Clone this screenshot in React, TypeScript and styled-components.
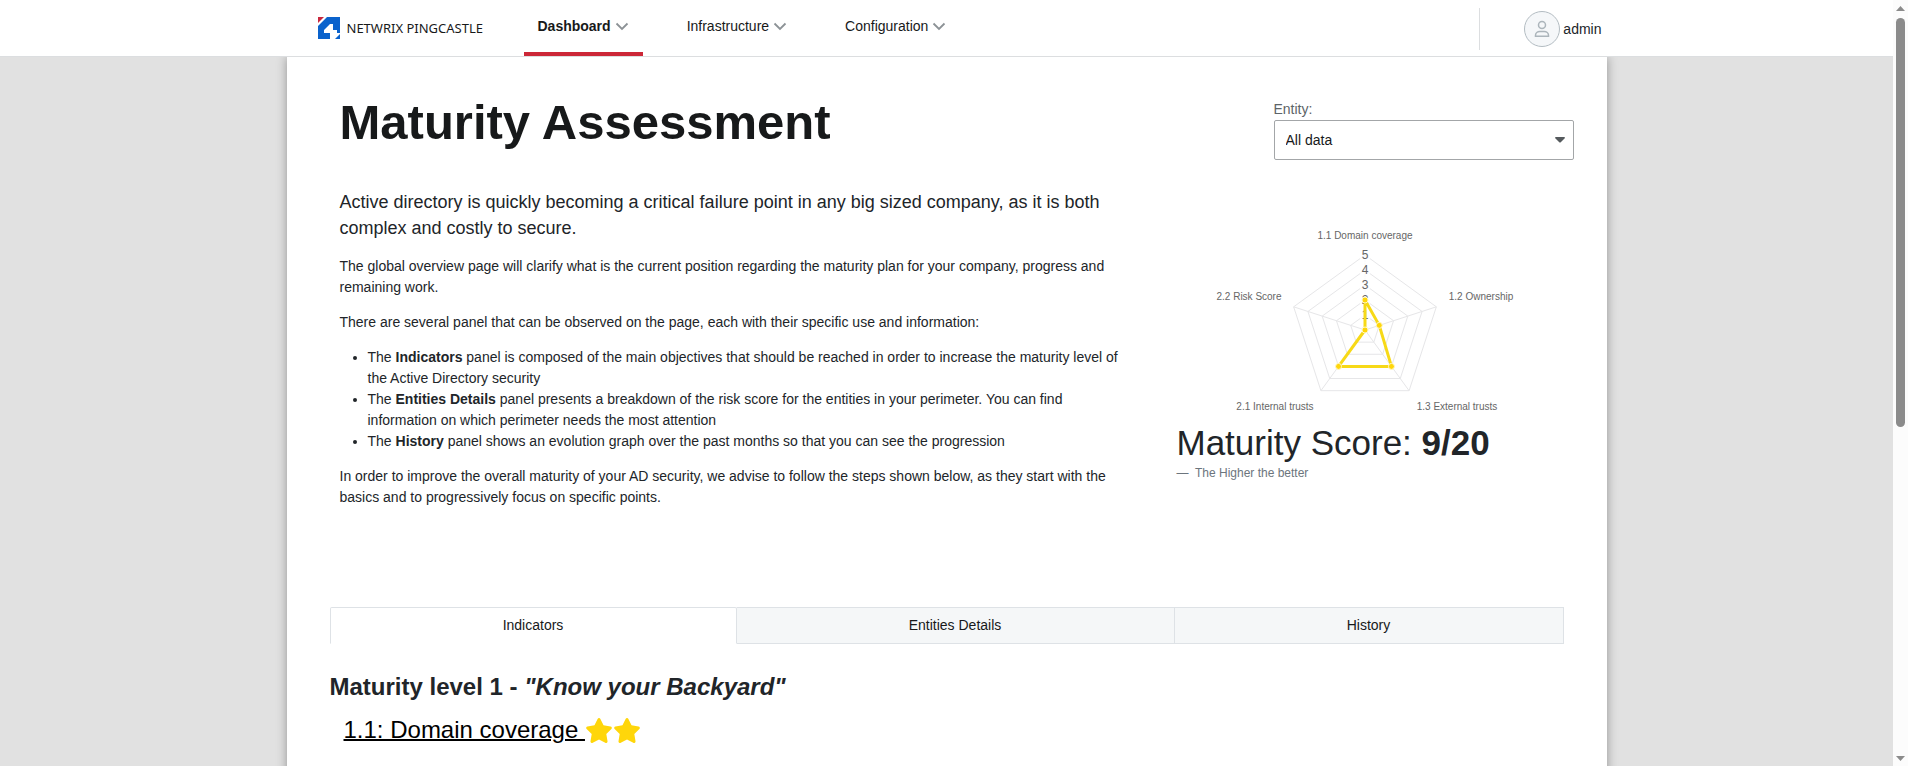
import React from "react";
import styled, { createGlobalStyle } from "styled-components";
import { FaStar } from "react-icons/fa6";

const GlobalStyle = createGlobalStyle`
  * { box-sizing: border-box; }
  html, body { height: 100%; }
  body {
    margin: 0;
    overflow: hidden;
    background: #e1e1e1;
    color: #212529;
    font: 14px/21px "Liberation Sans", Arial, sans-serif;
  }
  p, h1, h2, h3, ul, figure { margin: 0; }
`;

const Shell = styled.div`
  display: flex;
  height: 100vh;
`;

const Viewport = styled.div`
  flex: 1;
  min-width: 0;
  overflow: hidden;
`;

const ScrollRail = styled.div`
  flex: none;
  width: 15px;
  padding: 6px 0 5px;
  display: flex;
  flex-direction: column;
  align-items: center;
  background: #fcfcfc;
`;

const RailTrack = styled.div`
  flex: 1;
  width: 9px;
  margin: 7px 0;
`;

const RailThumb = styled.div`
  height: 56%;
  border-radius: 5px;
  background: #8b8b8b;
`;

const TopBar = styled.header`
  position: relative;
  z-index: 1;
  height: 57px;
  background: #fff;
  border-bottom: 1px solid #dcdee0;
`;

const TopInner = styled.div`
  display: flex;
  align-items: stretch;
  height: 100%;
  max-width: 1320px;
  margin: 0 auto;
  padding: 0 5px 0 31px;
`;

const Brand = styled.a`
  display: flex;
  align-items: center;
  gap: 7px;
  width: 206px;
  color: #17191a;
  font: 13px/20px "Noto Sans", sans-serif;
  white-space: nowrap;
  text-decoration: none;
`;

const Nav = styled.nav`
  display: flex;
  gap: 30px;
  flex: 1;
`;

const NavButton = styled.button<{ $active?: boolean }>`
  display: flex;
  align-items: center;
  gap: 4px;
  padding: 0 14px;
  border: 0;
  border-bottom: 4px solid ${(p) => (p.$active ? "#cc2737" : "transparent")};
  background: none;
  color: #17191a;
  font: ${(p) => (p.$active ? 700 : 400)} 14px/21px "Liberation Sans", Arial, sans-serif;
`;

const Account = styled.div`
  display: flex;
  align-items: center;
  gap: 3px;
  align-self: center;
  height: 42px;
  padding-left: 44px;
  border-left: 1px solid #dcdee0;
  margin-top: 2px;
`;

const Avatar = styled.span`
  display: grid;
  place-items: center;
  width: 36px;
  height: 36px;
  border: 1px solid #b3bcc2;
  border-radius: 50%;
  background: #f5f7f9;
`;

const Sheet = styled.main`
  max-width: 1320px;
  min-height: 100%;
  margin: 0 auto;
  padding: 34px 33px 0 43px;
  background: #fff;
  box-shadow: 0 0 10px rgba(0, 0, 0, 0.35);
`;

const TitleRow = styled.div`
  display: flex;
  justify-content: space-between;
  padding-left: 10px;
`;

const Title = styled.h1`
  padding-top: 1px;
  color: #17191a;
  font-size: 49px;
  line-height: 60px;
`;

const EntityField = styled.div`
  display: flex;
  flex-direction: column;
  width: 300px;
  padding-top: 8px;
  color: #5d6468;
`;

const SelectWrap = styled.div`
  position: relative;
`;

const Select = styled.select`
  appearance: none;
  display: block;
  width: 100%;
  height: 40px;
  padding: 0 11px;
  border: 1px solid #a3a6a8;
  border-radius: 2px;
  background: #fff;
  color: #17191a;
  font: inherit;
`;

const Caret = styled.svg`
  position: absolute;
  right: 9px;
  top: 17px;
  pointer-events: none;
`;

const Overview = styled.section`
  display: flex;
  justify-content: space-between;
  gap: 48px;
  padding: 29px 0 0 10px;
`;

const Copy = styled.div`
  display: flex;
  flex-direction: column;
  gap: 14px;
  flex: 1;
  max-width: 790px;
`;

const Lead = styled.p`
  padding-bottom: 1px;
  font-size: 18px;
  line-height: 26px;
`;

const PanelList = styled.ul`
  padding-left: 28px;
`;

const ScoreColumn = styled.figure`
  width: 397px;
  padding-top: 34px;
`;

const RadarSvg = styled.svg`
  display: block;
  font-family: "Liberation Sans", Arial, sans-serif;
  fill: #666;
`;

const Score = styled.figcaption`
  color: #212529;
  font-size: 35px;
  line-height: 42px;
`;

const ScoreNote = styled.p`
  color: #6c757d;
  font-size: 12px;
  line-height: 18px;
`;

const Tabs = styled.div`
  display: grid;
  grid-template-columns: 407fr 438fr 389fr;
  max-width: 1234px;
  margin-top: 99px;
`;

const Tab = styled.button<{ $active?: boolean }>`
  height: 37px;
  padding: 0;
  border: 1px solid #dee2e6;
  border-left-width: ${(p) => (p.$active ? "1px" : "0")};
  border-bottom-color: ${(p) => (p.$active ? "#fff" : "#dee2e6")};
  border-radius: ${(p) => (p.$active ? "2px 2px 0 0" : "0")};
  background: ${(p) => (p.$active ? "#fff" : "#f5f7f8")};
  color: #17191a;
  font: inherit;
`;

const LevelHeading = styled.h2`
  margin-top: 28px;
  font-size: 24px;
  line-height: 30px;
`;

const IndicatorRow = styled.h3`
  display: flex;
  align-items: center;
  margin-top: 13px;
  padding-left: 14px;
  font-size: 24px;
  font-weight: 400;
  line-height: 30px;
`;

const IndicatorLink = styled.a`
  color: #000;
  text-decoration: underline;
  text-decoration-thickness: 2px;
  white-space: pre;
`;

const Star = styled(FaStar)`
  width: 28px;
  height: 25px;
  color: #ffd60a;
`;

const Chevron = () => (
  <svg width="14" height="14" viewBox="0 0 14 14" fill="none" stroke="#8c9296" strokeWidth="1.8" aria-hidden="true">
    <path d="M1.5 4.5 7 10l5.5-5.5" />
  </svg>
);

const BrandMark = () => (
  <svg width="22" height="22" viewBox="0 0 22 22" aria-hidden="true">
    <path fill="#c9283e" d="M0 0h6L0 6z" />
    <path fill="#0a62cc" d="M9 0h13v17h-5l-5 5H0V9z" />
    <path fill="#fff" d="M12 7h3v6h4v3h-4v6h-3v-6H6v-3z" />
    <path fill="#fff" d="M15 16h7v1l-5 5h-2z" />
    <path fill="#0a62cc" d="M22 17v5h-5z" />
  </svg>
);

const CENTER = { x: 188, y: 107 };
const STEP = 15;
const scores = [2, 1, 3, 3, 0];

const vertex = (axis: number, level: number) => {
  const angle = (axis * 2 * Math.PI) / 5 - Math.PI / 2;
  return {
    x: CENTER.x + Math.cos(angle) * level * STEP,
    y: CENTER.y + Math.sin(angle) * level * STEP,
  };
};

const ring = (levels: number[]) =>
  levels.map((level, axis) => `${vertex(axis, level).x},${vertex(axis, level).y}`).join(" ");

const axisLabels = [
  { text: "1.1 Domain coverage", x: 188, y: 16 },
  { text: "1.2 Ownership", x: 304, y: 77 },
  { text: "1.3 External trusts", x: 280, y: 187 },
  { text: "2.1 Internal trusts", x: 98, y: 187 },
  { text: "2.2 Risk Score", x: 72, y: 77 },
];

const Radar = () => (
  <RadarSvg width="376" height="199" viewBox="0 0 376 199" role="img" aria-label="Maturity score by indicator">
    <g fill="none" stroke="#e6e6e8">
      {[1, 2, 3, 4, 5].map((level) => (
        <polygon key={level} points={ring([level, level, level, level, level])} />
      ))}
      {scores.map((_, axis) => (
        <line key={axis} x1={CENTER.x} y1={CENTER.y} x2={vertex(axis, 5).x} y2={vertex(axis, 5).y} />
      ))}
    </g>
    <g fontSize="12" textAnchor="middle">
      {[1, 2, 3, 4, 5].map((level) => (
        <g key={level}>
          <rect x={CENTER.x - 5} y={CENTER.y - level * STEP - 8} width="10" height="16" fill="#fff" fillOpacity="0.75" />
          <text x={CENTER.x} y={CENTER.y - level * STEP + 4}>{level}</text>
        </g>
      ))}
    </g>
    <g fontSize="10" textAnchor="middle">
      {axisLabels.map((label) => (
        <text key={label.text} x={label.x} y={label.y}>{label.text}</text>
      ))}
    </g>
    <polygon points={ring(scores)} fill="none" stroke="#f7d917" strokeWidth="3" strokeLinejoin="round" />
    {scores.map((score, axis) => (
      <circle key={axis} cx={vertex(axis, score).x} cy={vertex(axis, score).y} r="3" fill="#ffd60a" stroke="#fff8c8" strokeWidth="1" />
    ))}
  </RadarSvg>
);

export default function App() {
  return (
    <>
      <GlobalStyle />
      <Shell>
        <Viewport>
          <TopBar>
            <TopInner>
              <Brand href="#"><BrandMark />NETWRIX PINGCASTLE</Brand>
              <Nav>
                <NavButton $active>Dashboard <Chevron /></NavButton>
                <NavButton>Infrastructure <Chevron /></NavButton>
                <NavButton>Configuration <Chevron /></NavButton>
              </Nav>
              <Account>
                <Avatar>
                  <svg width="16" height="18" viewBox="0 0 16 18" fill="none" stroke="#acb5bb" strokeWidth="1.5" aria-hidden="true">
                    <circle cx="8" cy="5" r="3.5" />
                    <path d="M1.5 16.2v-1c0-2.200 2-3.700 4.300-3.700h4.400c2.300 0 4.300 1.500 4.300 3.700v1z" />
                  </svg>
                </Avatar>
                admin
              </Account>
            </TopInner>
          </TopBar>
          <Sheet>
            <TitleRow>
              <Title>Maturity Assessment</Title>
              <EntityField>
                <label htmlFor="entity">Entity:</label>
                <SelectWrap>
                  <Select id="entity"><option>All data</option></Select>
                  <Caret width="10" height="6" viewBox="0 0 10 6" aria-hidden="true">
                    <path d="M0 1Q0 0 1 0h8q1 0 1 1L6 5Q5 6 4 5z" fill="#555a5d" />
                  </Caret>
                </SelectWrap>
              </EntityField>
            </TitleRow>
            <Overview>
              <Copy>
                <Lead>
                  Active directory is quickly becoming a critical failure point in any big sized company, as it is both
                  complex and costly to secure.
                </Lead>
                <p>
                  The global overview page will clarify what is the current position regarding the maturity plan for
                  your company, progress and remaining work.
                </p>
                <p>There are several panel that can be observed on the page, each with their specific use and information:</p>
                <PanelList>
                  <li>The <b>Indicators</b> panel is composed of the main objectives that should be reached in order to increase the maturity level of the Active Directory security</li>
                  <li>The <b>Entities Details</b> panel presents a breakdown of the risk score for the entities in your perimeter. You can find information on which perimeter needs the most attention</li>
                  <li>The <b>History</b> panel shows an evolution graph over the past months so that you can see the progression</li>
                </PanelList>
                <p>
                  In order to improve the overall maturity of your AD security, we advise to follow the steps shown
                  below, as they start with the basics and to progressively focus on specific points.
                </p>
              </Copy>
              <ScoreColumn>
                <Radar />
                <Score>Maturity Score: <b>9/20</b></Score>
                <ScoreNote>—&nbsp; The Higher the better</ScoreNote>
              </ScoreColumn>
            </Overview>
            <Tabs role="tablist">
              <Tab $active role="tab" aria-selected="true">Indicators</Tab>
              <Tab role="tab" aria-selected="false">Entities Details</Tab>
              <Tab role="tab" aria-selected="false">History</Tab>
            </Tabs>
            <LevelHeading>Maturity level 1 - <i>"Know your Backyard"</i></LevelHeading>
            <IndicatorRow>
              <IndicatorLink href="#">{"1.1: Domain coverage "}</IndicatorLink>
              <Star aria-hidden="true" />
              <Star aria-hidden="true" />
            </IndicatorRow>
          </Sheet>
        </Viewport>
        <ScrollRail aria-hidden="true">
          <svg width="9" height="5" viewBox="0 0 9 5"><path d="M0 5 4.5 0 9 5z" fill="#8b8b8b" /></svg>
          <RailTrack><RailThumb /></RailTrack>
          <svg width="9" height="5" viewBox="0 0 9 5"><path d="M0 0h9L4.5 5z" fill="#8b8b8b" /></svg>
        </ScrollRail>
      </Shell>
    </>
  );
}
